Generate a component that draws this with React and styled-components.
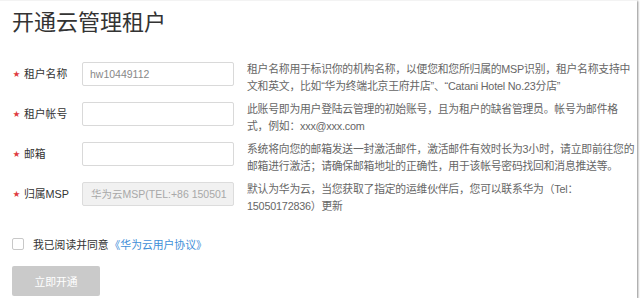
import styled, { createGlobalStyle } from "styled-components";

const Global = createGlobalStyle`
html, body {
  margin: 0;
  background: #fff;
}
body {
  font-family: "Liberation Sans", "Noto Sans CJK SC", sans-serif;
  color: #333;
}
`;

const Frame = styled.div`
  width: 637px;
  height: 298px;
  box-sizing: border-box;
  border-top: 1px solid #f3f3f3;
  box-shadow: 1px 1px 2px rgba(0, 0, 0, 0.45);
  padding-left: 12px;
  overflow: hidden;
`;

const Title = styled.h1`
  margin: 0 0 18px;
  height: 43px;
  line-height: 43px;
  font-size: 22px;
  font-weight: 400;
  color: #333;
`;

const Form = styled.div`
  display: grid;
  grid-template-columns: 70px 152px minmax(0, 1fr);
  grid-auto-rows: 40px;
  align-items: start;
`;

const Label = styled.div`
  height: 24px;
  line-height: 24px;
  font-size: 10.8px;
  color: #333;
  display: flex;
  align-items: center;
`;

const Star = styled.span`
  color: #e0393e;
  font-size: 7px;
  width: 11px;
  margin-left: 1px;
`;

const Input = styled.div`
  height: 24px;
  box-sizing: border-box;
  border: 1px solid ${(p) => (p.$disabled ? "#dcdcdc" : "#d9d9d9")};
  border-radius: 2px;
  background: ${(p) => (p.$disabled ? "#f1f1f1" : "#fff")};
  color: ${(p) => (p.$disabled ? "#a8a8a8" : "#888")};
  font-size: 10.5px;
  line-height: 22px;
  padding-left: ${(p) => (p.$disabled ? "8px" : "7px")};
  white-space: nowrap;
  overflow: hidden;
`;

const Desc = styled.div`
  margin: -1px 0 0 13px;
  font-size: 10.8px;
  letter-spacing: -0.2px;
  line-height: 16.5px;
  color: #666;
  white-space: nowrap;
`;

const Agree = styled.div`
  display: flex;
  align-items: center;
  height: 20px;
  margin-top: 12px;
  font-size: 10.8px;
  color: #333;
`;

const Check = styled.span`
  width: 12px;
  height: 12px;
  box-sizing: border-box;
  border: 1px solid #c8c8c8;
  border-radius: 2px;
  background: #fff;
  margin-right: 9px;
`;

const Link = styled.a`
  color: #3f8fd8;
  text-decoration: none;
  margin-left: 1px;
`;

const Button = styled.button`
  display: block;
  margin-top: 12px;
  width: 88px;
  height: 30px;
  border: none;
  border-radius: 2px;
  background: #cacaca;
  color: #fff;
  font-family: inherit;
  font-size: 10.8px;
  padding: 0;
`;

const rows = [
  {
    label: "租户名称",
    value: "hw10449112",
    desc: [
      "租户名称用于标识你的机构名称，以便您和您所归属的MSP识别，租户名称支持中",
      "文和英文，比如“华为终端北京王府井店”、“Catani Hotel No.23分店”",
    ],
  },
  {
    label: "租户帐号",
    desc: [
      "此账号即为用户登陆云管理的初始账号，且为租户的缺省管理员。帐号为邮件格",
      "式，例如：xxx@xxx.com",
    ],
  },
  {
    label: "邮箱",
    desc: [
      "系统将向您的邮箱发送一封激活邮件，激活邮件有效时长为3小时，请立即前往您的",
      "邮箱进行激活；请确保邮箱地址的正确性，用于该帐号密码找回和消息推送等。",
    ],
  },
  {
    label: "归属MSP",
    value: "华为云MSP(TEL:+86 150501",
    disabled: true,
    desc: [
      "默认为华为云，当您获取了指定的运维伙伴后，您可以联系华为（Tel：",
      "15050172836）更新",
    ],
  },
];

export default function App() {
  return (
    <>
      <Global />
      <Frame>
        <Title>开通云管理租户</Title>
        <Form>
          {rows.map((r) => [
            <Label key={r.label + "l"}>
              <Star>★</Star>
              {r.label}
            </Label>,
            <Input key={r.label + "i"} $disabled={r.disabled}>
              {r.value}
            </Input>,
            <Desc key={r.label + "d"}>
              {r.desc[0]}
              <br />
              {r.desc[1]}
            </Desc>,
          ])}
        </Form>
        <Agree>
          <Check />
          我已阅读并同意
          <Link>《华为云用户协议》</Link>
        </Agree>
        <Button>立即开通</Button>
      </Frame>
    </>
  );
}
